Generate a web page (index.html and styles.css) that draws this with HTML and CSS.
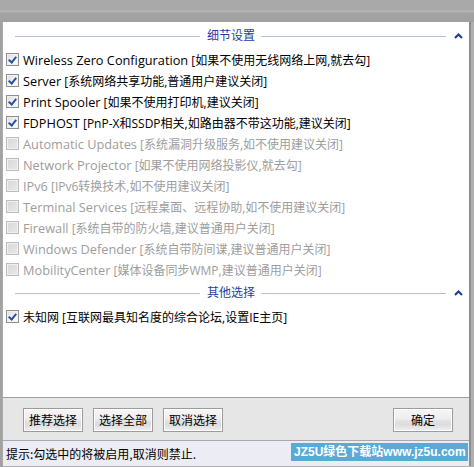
FILE: index.html
```html
<!DOCTYPE html>
<html lang="zh-CN">
<head>
<meta charset="utf-8">
<title>细节设置</title>
<link rel="stylesheet" href="styles.css">
</head>
<body>
<div class="top"></div>
<div class="window">
  <div class="panel">
    <div class="group-head">
      <span class="line"></span>
      <span class="gtitle">细节设置</span>
      <span class="line"></span>
      <span class="chev"><svg width="9" height="6" viewBox="0 0 9 6"><path d="M1 5 L4.5 1.5 L8 5" fill="none" stroke="#173c8c" stroke-width="2"/></svg></span>
    </div>
    <div class="row"><span class="cb on"></span><span><span class="en">Wireless Zero Configuration</span> [如果不使用无线网络上网,就去勾]</span></div>
    <div class="row"><span class="cb on"></span><span><span class="en">Server</span> [系统网络共享功能,普通用户建议关闭]</span></div>
    <div class="row"><span class="cb on"></span><span><span class="en">Print Spooler</span> [如果不使用打印机,建议关闭]</span></div>
    <div class="row"><span class="cb on"></span><span><span class="en">FDPHOST</span> [PnP-X和SSDP相关,如路由器不带这功能,建议关闭]</span></div>
    <div class="row off"><span class="cb"></span><span><span class="en">Automatic Updates</span> [系统漏洞升级服务,如不使用建议关闭]</span></div>
    <div class="row off"><span class="cb"></span><span><span class="en">Network Projector</span> [如果不使用网络投影仪,就去勾]</span></div>
    <div class="row off"><span class="cb"></span><span><span class="en">IPv6</span> [IPv6转换技术,如不使用建议关闭]</span></div>
    <div class="row off"><span class="cb"></span><span><span class="en">Terminal Services</span> [远程桌面、远程协助,如不使用建议关闭]</span></div>
    <div class="row off"><span class="cb"></span><span><span class="en">Firewall</span> [系统自带的防火墙,建议普通用户关闭]</span></div>
    <div class="row off"><span class="cb"></span><span><span class="en">Windows Defender</span> [系统自带防间谍,建议普通用户关闭]</span></div>
    <div class="row off"><span class="cb"></span><span><span class="en">MobilityCenter</span> [媒体设备同步WMP,建议普通用户关闭]</span></div>
    <div class="group-head second">
      <span class="line"></span>
      <span class="gtitle">其他选择</span>
      <span class="line"></span>
      <span class="chev"><svg width="9" height="6" viewBox="0 0 9 6"><path d="M1 5 L4.5 1.5 L8 5" fill="none" stroke="#173c8c" stroke-width="2"/></svg></span>
    </div>
    <div class="row after"><span class="cb on"></span><span>未知网 [互联网最具知名度的综合论坛,设置IE主页]</span></div>
  </div>
  <div class="actions">
    <button class="btn">推荐选择</button>
    <button class="btn">选择全部</button>
    <button class="btn">取消选择</button>
    <span class="spacer"></span>
    <button class="btn">确定</button>
  </div>
  <div class="status">
    <span class="hint">提示:勾选中的将被启用,取消则禁止.</span>
    <span class="mark">JZ5U绿色下载站www.jz5u.com</span>
  </div>
</div>
</body>
</html>
```
FILE: styles.css
```css
html, body {
  margin: 0;
  padding: 0;
}
body {
  width: 474px;
  height: 467px;
  overflow: hidden;
  background: linear-gradient(90deg, #a2a2a2 0, #a2a2a2 2px, #b0b0b0 3px);
  font-family: "Open Sans", "Noto Sans CJK SC", sans-serif;
  font-size: 12px;
  color: #000;
}
.top {
  height: 22px;
  background: linear-gradient(180deg, #a9a9a9 0, #a9a9a9 10px, #b9b9b9 11px, #a4a4a4 13px, #a0a0a0 22px);
}
.window {
  margin: 0 5px 0 3px;
  box-shadow: 2px 0 0 #8e8e8e;
}
.panel {
  height: 376px;
  box-sizing: border-box;
  background: #fff;
  padding-top: 4px;
  border-bottom: 1px solid #a0a0a0;
}
.group-head {
  display: flex;
  align-items: center;
  height: 20px;
  padding-left: 12px;
  margin-bottom: 3px;
}
.group-head.second {
  margin-top: 3px;
  margin-bottom: 3px;
}
.line {
  flex: 1;
  height: 1px;
  background: #b4c0da;
}
.gtitle {
  color: #1d3f9e;
  padding: 0 6px 0 7px;
  line-height: 20px;
}
.chev {
  width: 23px;
  display: flex;
  justify-content: flex-end;
  padding-right: 6px;
  box-sizing: border-box;
  align-items: center;
  height: 20px;
}
.chev svg {
  display: block;
}
.row {
  display: flex;
  align-items: center;
  height: 21px;
  padding-left: 3px;
  white-space: nowrap;
}
.en {
  font-size: 12.75px;
}
.row.off {
  color: #9d9d9d;
}
.cb {
  width: 13px;
  height: 13px;
  box-sizing: border-box;
  border: 1px solid #8e8f8f;
  background: linear-gradient(135deg, #dcdcdc 0, #f4f4f4 60%, #ffffff 100%);
  box-shadow: inset 0 0 0 1px #f2f2f2;
  margin-right: 4px;
  flex: none;
  position: relative;
}
.cb.on::after {
  content: "";
  position: absolute;
  left: 3px;
  top: 1px;
  width: 3px;
  height: 6px;
  border: solid #2c4ea6;
  border-width: 0 2px 2px 0;
  transform: rotate(40deg);
}
.row.off .cb {
  border-color: #bcbcbc;
  background: linear-gradient(135deg, #d8d8d8 0, #e8e8e8 100%);
  box-shadow: inset 0 0 0 1px #f0f0f0;
}
.actions {
  height: 43px;
  box-sizing: border-box;
  background: #e6e6e6;
  border-bottom: 1px solid #a9a9a9;
  display: flex;
  align-items: flex-start;
  gap: 10px;
  padding: 10px 16px 0 20px;
}
.spacer {
  flex: 1;
}
.btn {
  width: 60px;
  height: 24px;
  box-sizing: border-box;
  border: 1px solid #9c9c9c;
  box-shadow: inset 0 0 0 1px #ffffff;
  background: linear-gradient(180deg, #f6f6f6 0, #ededf0 45%, #e2e2e4 55%, #dcdcde 70%, #f0f0f0 100%);
  font-family: "Noto Sans CJK SC", sans-serif;
  font-size: 12px;
  color: #000;
  padding: 0;
  margin: 0;
  line-height: 20px;
}
.status {
  height: 25px;
  background: #ececf5;
  display: flex;
  align-items: center;
  justify-content: space-between;
  padding-left: 3px;
  padding-right: 1px;
}
.hint {
  font-family: "Noto Sans CJK SC", sans-serif;
  font-size: 12px;
}
.mark {
  background: #5aaad6;
  color: #fff;
  font-weight: bold;
  font-size: 12px;
  font-family: "Liberation Sans", "Noto Sans CJK SC", sans-serif;
  height: 18px;
  line-height: 18px;
  width: 177px;
  box-sizing: border-box;
  padding-left: 3px;
  white-space: nowrap;
  overflow: hidden;
  margin-top: -3px;
}
```
